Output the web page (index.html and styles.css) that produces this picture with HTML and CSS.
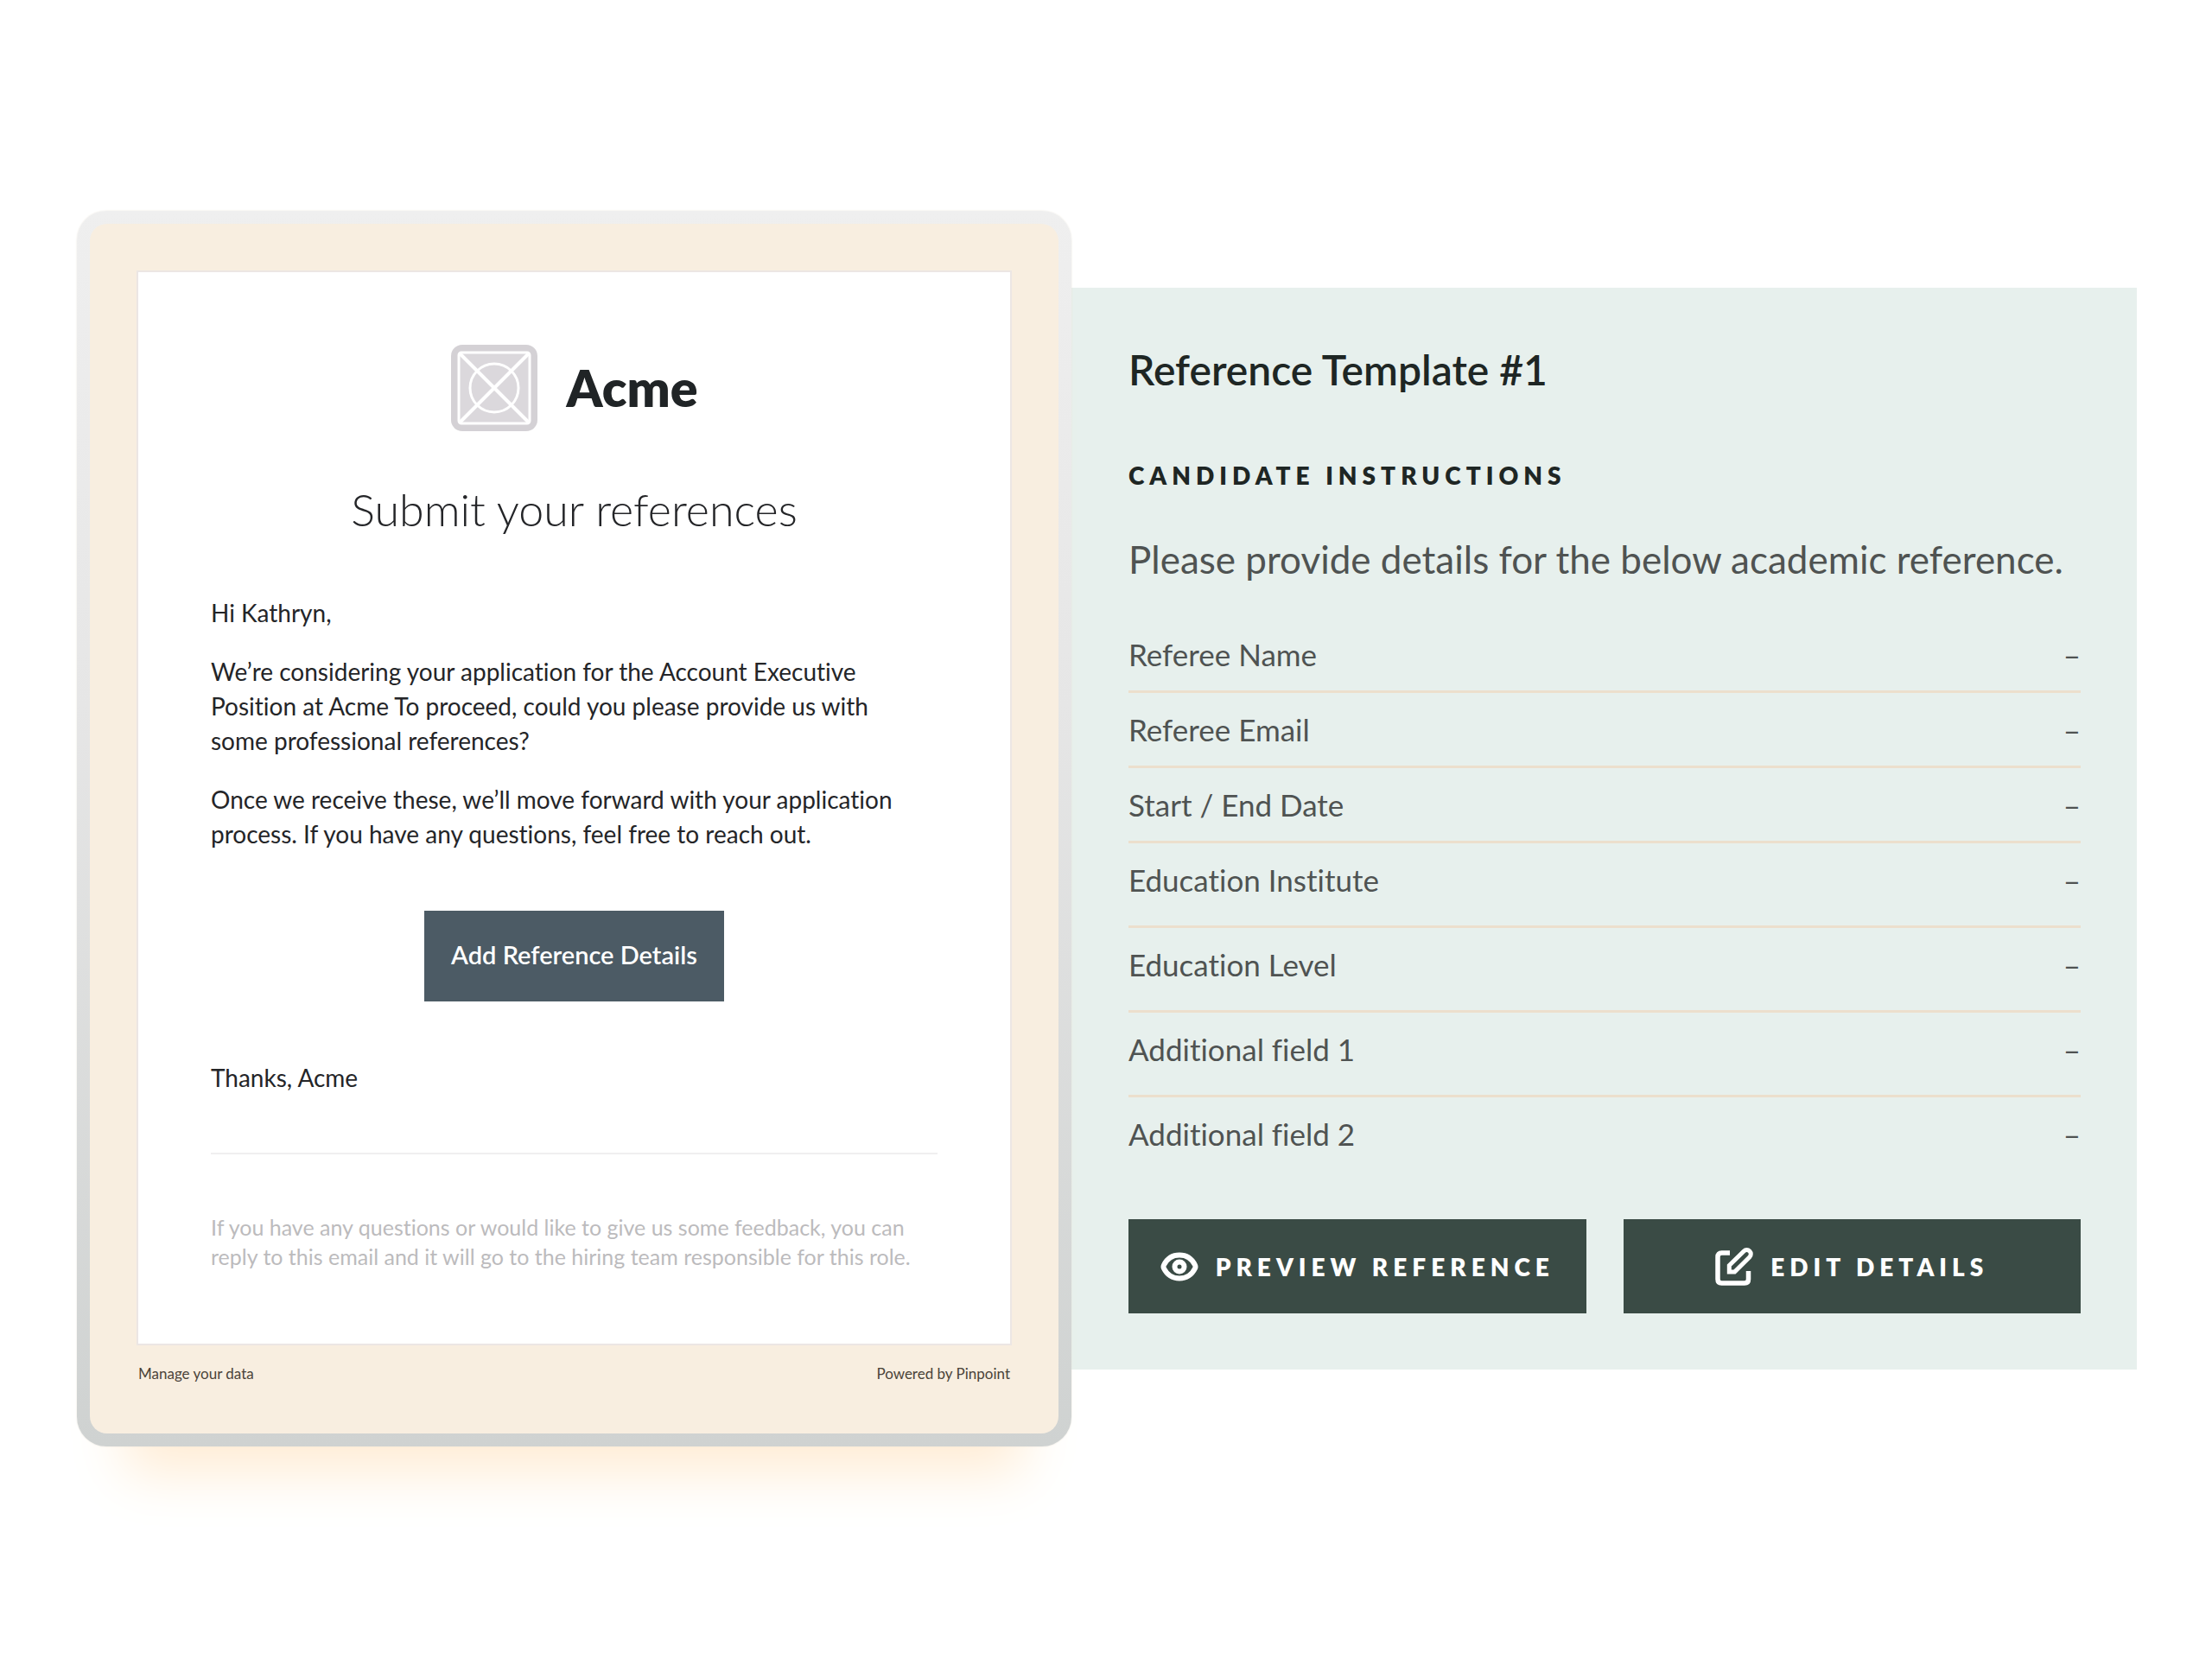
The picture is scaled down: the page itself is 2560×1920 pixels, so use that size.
FILE: index.html
```html
<!DOCTYPE html>
<html lang="en">
<head>
  <meta charset="utf-8">
  <meta name="viewport" content="width=device-width, initial-scale=1">
  <title>Submit your references</title>
  <link rel="stylesheet" href="styles.css">
</head>
<body>
  <main class="page">
    <section class="device">
      <div class="screen">
        <article class="email">
          <header class="brand">
            <svg class="brand-mark" viewBox="0 0 100 100" aria-hidden="true">
              <rect width="100" height="100" rx="13" fill="#d4d1d5"/>
              <rect x="9" y="9" width="82" height="82" rx="3" fill="#dbd8dc" stroke="#fff" stroke-width="3"/>
              <path d="M10 10l80 80M90 10l-80 80" stroke="#fff" stroke-width="4"/>
              <circle cx="50" cy="50" r="28" fill="none" stroke="#fff" stroke-width="3"/>
            </svg>
            <span class="brand-name">Acme</span>
          </header>
          <h1 class="email-title">Submit your references</h1>
          <div class="email-body">
            <p>Hi Kathryn,</p>
            <p>We’re considering your application for the Account Executive Position at Acme To proceed, could you please provide us with some professional references?</p>
            <p>Once we receive these, we’ll move forward with your application process. If you have any questions, feel free to reach out.</p>
          </div>
          <button class="email-action" type="button">Add Reference Details</button>
          <p class="email-sign">Thanks, Acme</p>
          <hr class="rule">
          <p class="email-note">If you have any questions or would like to give us some feedback, you can reply to this email and it will go to the hiring team responsible for this role.</p>
        </article>
        <footer class="legal">
          <a href="#">Manage your data</a>
          <a href="#">Powered by Pinpoint</a>
        </footer>
      </div>
    </section>

    <section class="panel">
      <h2 class="panel-title">Reference Template #1</h2>
      <h3 class="panel-label">CANDIDATE INSTRUCTIONS</h3>
      <p class="panel-lead">Please provide details for the below academic reference.</p>
      <dl class="fields">
        <div class="field"><dt>Referee Name</dt><dd>–</dd></div>
        <div class="field"><dt>Referee Email</dt><dd>–</dd></div>
        <div class="field"><dt>Start / End Date</dt><dd>–</dd></div>
        <div class="field field-tall"><dt>Education Institute</dt><dd>–</dd></div>
        <div class="field field-tall"><dt>Education Level</dt><dd>–</dd></div>
        <div class="field field-tall"><dt>Additional field 1</dt><dd>–</dd></div>
        <div class="field"><dt>Additional field 2</dt><dd>–</dd></div>
      </dl>
      <div class="actions">
        <button class="action" type="button">
          <svg class="icon" viewBox="0 0 44 44" aria-hidden="true" fill="none" stroke="currentColor" stroke-width="6">
            <path d="M4 24Q3 22 4 20C8 12 14 8.500 22 8.500S36 12 40 20Q41 22 40 24C36 32 30 35.500 22 35.500S8 32 4 24Z"/>
            <circle cx="22" cy="22" r="5.500"/>
          </svg>
          <span>PREVIEW REFERENCE</span>
        </button>
        <button class="action" type="button">
          <svg class="icon" viewBox="0 0 44 44" aria-hidden="true" fill="none" stroke="currentColor" stroke-width="5.500">
            <path d="M17 6H7.500Q3 6 3 10.500V36.500Q3 41 7.500 41H34Q38.500 41 38.500 36.500V27"/>
            <path d="M16.300 28V20.500L33.200 4A4.700 4.700 0 0 1 39.900 10.700L22.500 28Z" stroke-width="5"/>
          </svg>
          <span>EDIT DETAILS</span>
        </button>
      </div>
    </section>
  </main>
</body>
</html>
```
FILE: styles.css
```css
*,
*::before,
*::after {
  box-sizing: border-box;
}

body,
h1,
h2,
h3,
p,
dl,
dd {
  margin: 0;
}

body {
  background: #fff;
  color: #242528;
  font-family: Lato, "Open Sans", sans-serif;
  font-size: 28px;
  font-variant-ligatures: none;
  line-height: 40px;
}

button {
  border: 0;
  font-family: inherit;
  cursor: pointer;
}

.page {
  display: grid;
  grid-template-columns: 1151fr 1233fr;
  align-items: center;
  min-height: 100vh;
  padding: 64px 87px 66px 89px;
}

/* Email preview inside a device frame */
.device {
  position: relative;
  padding: 15px;
  border-radius: 34px;
  background: linear-gradient(#efefef, #e6e6e6 40%, #cfd2d1);
  box-shadow: 0 0 2px #e9e4da, 0 86px 60px -56px #ffecd4;
}

.screen {
  padding: 54px 54px 57px;
  border-radius: 20px;
  background: #f8eee0;
}

.email {
  display: flex;
  flex-direction: column;
  padding: 84px;
  border: 2px solid #ece6e4;
  background: #fff;
}

.brand {
  display: flex;
  align-items: center;
  justify-content: center;
  gap: 34px;
}

.brand-mark {
  width: 100px;
  height: 100px;
}

.brand-name {
  color: #202426;
  font-size: 59px;
  font-weight: 800;
  line-height: 72px;
}

.email-title {
  margin: 58px 0 68px;
  font-size: 52px;
  font-weight: 300;
  line-height: 64px;
  text-align: center;
}

.email-body {
  display: grid;
  gap: 28px;
  max-width: 820px;
}

.email-action {
  align-self: center;
  width: 347px;
  height: 105px;
  margin: 69px 0 68px;
  padding: 0 0 4px;
  background: #4c5b65;
  color: #fff;
  font-size: 29px;
  font-weight: 600;
}

.rule {
  width: 100%;
  height: 2px;
  margin: 67px 0;
  border: 0;
  background: #f0eff0;
}

.email-note {
  max-width: 820px;
  color: #bcbbbd;
  font-size: 25px;
  line-height: 34px;
}

.legal {
  display: flex;
  justify-content: space-between;
  margin-top: 21px;
  padding: 0 2px;
  font-size: 17px;
  line-height: 24px;
}

.legal a {
  color: #4a4339;
  text-decoration: none;
}

/* Reference template */
.panel {
  padding: 65px 65px 65px 66px;
  background: #e7f0ed;
  color: #4f5352;
}

.panel-title {
  color: #1e2624;
  font-size: 48px;
  font-weight: 600;
  line-height: 60px;
}

.panel-label {
  margin: 74px 0 51px;
  color: #1e2624;
  font-size: 28px;
  font-weight: 800;
  letter-spacing: 6px;
  line-height: 36px;
}

.panel-lead {
  font-size: 44px;
  line-height: 56px;
}

.fields {
  margin-top: 40px;
  font-size: 35px;
  line-height: 44px;
}

.field {
  display: flex;
  justify-content: space-between;
  padding: 20px 0;
  border-bottom: 3px solid #ecdfcd;
}

.field-tall {
  padding-bottom: 31px;
}

.field:last-child {
  padding-bottom: 0;
  border-bottom: 0;
}

.actions {
  display: grid;
  grid-template-columns: 1fr 1fr;
  gap: 43px;
  margin-top: 77px;
}

.action {
  display: flex;
  align-items: center;
  justify-content: center;
  gap: 20px;
  height: 109px;
  padding: 0;
  background: #3a4b45;
  color: #fff;
  font-size: 28px;
  font-weight: 800;
  letter-spacing: 6px;
  line-height: 36px;
}

.icon {
  flex: none;
  width: 44px;
  height: 44px;
}
```
